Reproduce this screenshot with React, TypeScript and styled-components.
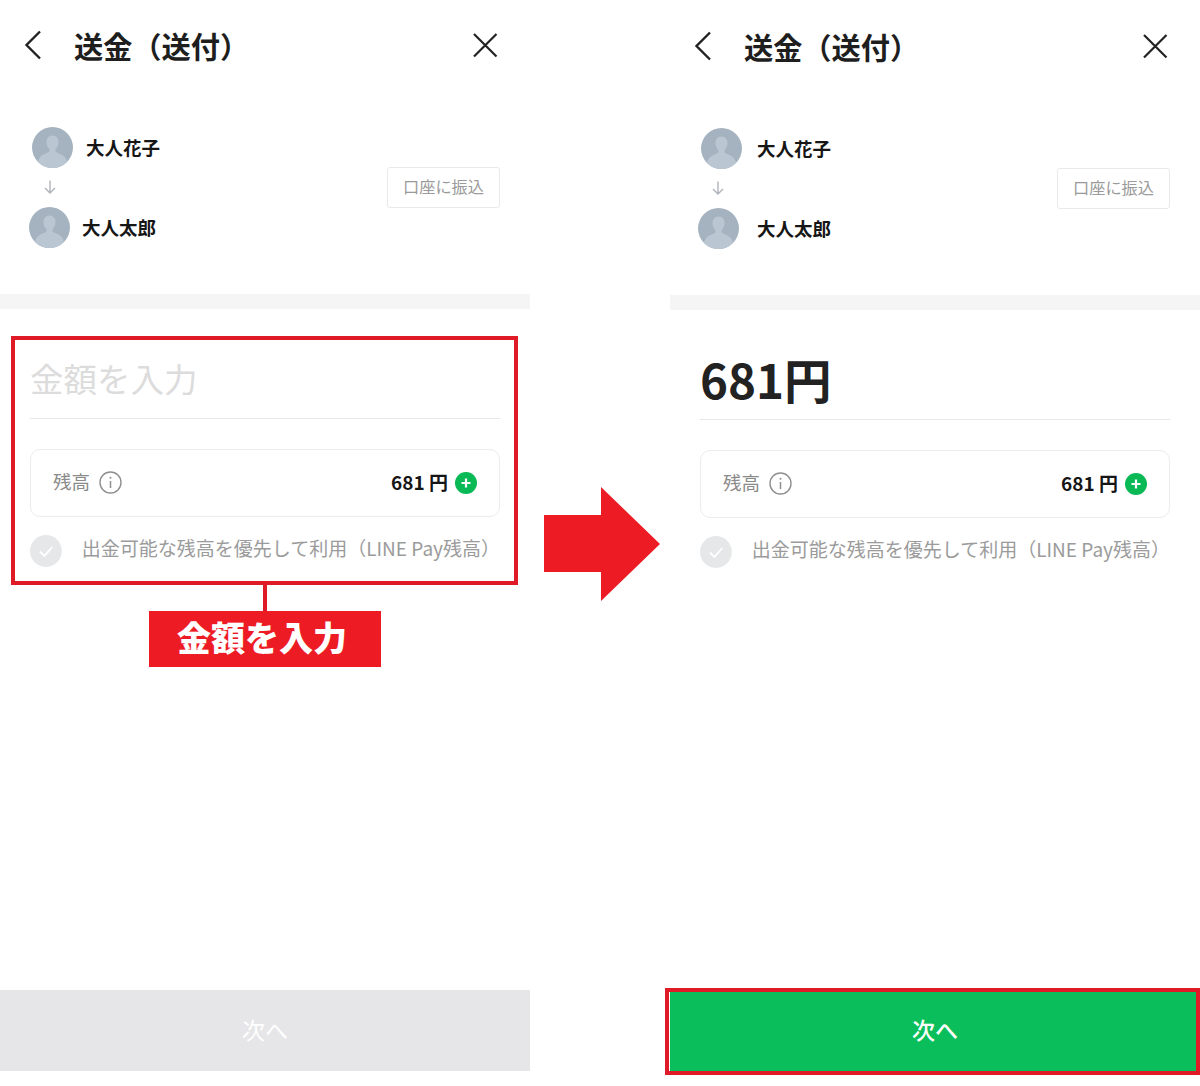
import React from "react";
import styled, { createGlobalStyle } from "styled-components";

const Global = createGlobalStyle`
  html, body { margin: 0; padding: 0; background: #fff; }
  * { box-sizing: border-box; }
  body { font-family: "Noto Sans CJK JP", "Noto Sans", sans-serif; }
`;

const Page = styled.div`
  position: relative;
  display: grid;
  grid-template-columns: 530px 140px 530px;
  width: 1200px;
  height: 1086px;
  overflow: hidden;
`;

const Panel = styled.section<{ $shift: number }>`
  display: flex;
  flex-direction: column;
  height: 1086px;
  padding-top: ${(p) => p.$shift}px;
`;

const Header = styled.header`
  display: flex;
  align-items: center;
  height: 92px;
  padding: 0 32px 0 24px;
`;

const Title = styled.h1`
  flex: 1;
  margin: 0 0 2px 32px;
  font-size: 29.2px;
  line-height: 40px;
  font-weight: 700;
  color: #1e1e1e;
`;

const IconButton = styled.span`
  display: flex;
  margin-bottom: 2px;
  color: #222;
`;

const Transfer = styled.div`
  display: flex;
  align-items: center;
  justify-content: space-between;
  height: 202px;
  padding: 0 30px 12px 0;
`;

const People = styled.div`
  display: flex;
  flex-direction: column;
`;

const Person = styled.div<{ $indent: number; $gap: number }>`
  display: flex;
  align-items: center;
  gap: ${(p) => p.$gap}px;
  height: 41px;
  padding-left: ${(p) => p.$indent}px;
`;

const Name = styled.span`
  font-size: 18.5px;
  font-weight: 700;
  color: #161616;
`;

const FlowArrow = styled.div<{ $indent: number }>`
  display: flex;
  align-items: center;
  height: 39px;
  padding-left: ${(p) => p.$indent}px;
  color: #aeb4ba;
`;

const BankButton = styled.button`
  width: 113px;
  height: 41px;
  padding: 0 0 2px;
  background: #fff;
  border: 1px solid #e9e9e9;
  border-radius: 3px;
  font: 400 16.2px "Noto Sans CJK JP", sans-serif;
  color: #9a9a9a;
`;

const Band = styled.div`
  height: 15px;
  background: #f5f5f6;
`;

const Form = styled.div`
  display: flex;
  flex-direction: column;
  padding: 0 30px;
`;

const AmountRow = styled.div`
  display: flex;
  align-items: center;
  height: 110px;
  padding: 28px 0 0;
  border-bottom: 1.5px solid #e8e8e8;
`;

const Placeholder = styled.span`
  font-size: 33.5px;
  line-height: 44px;
  color: #dcdcdc;
`;

const Amount = styled.span`
  font-size: 47.5px;
  line-height: 50px;
  font-weight: 700;
  color: #222;
`;

const BalanceCard = styled.div`
  display: flex;
  align-items: center;
  height: 68px;
  margin-top: 30px;
  padding: 0 22px;
  border: 1.5px solid #ececec;
  border-radius: 10px;
`;

const BalanceLabel = styled.span`
  margin: 0 9px 4px 0;
  font-size: 18.5px;
  color: #8a8a8a;
`;

const InfoIcon = styled.span`
  display: flex;
  flex: 1;
  margin-bottom: 2px;
  color: #8f8f8f;
`;

const BalanceValue = styled.span`
  margin: 0 7px 4px 0;
  font-size: 19px;
  font-weight: 700;
  color: #161616;
`;

const CheckRow = styled.div`
  display: flex;
  align-items: center;
  gap: 20px;
  margin-top: 17px;
`;

const CheckText = styled.span`
  margin: 0 0 6px;
  font-size: 19px;
  white-space: nowrap;
  color: #9b9b9b;
`;

const NextButton = styled.button<{ $active: boolean }>`
  height: 81px;
  margin-top: auto;
  margin-bottom: 15px;
  padding: 0 0 4px;
  border: 0;
  background: ${(p) => (p.$active ? "#0abf5b" : "#e6e6e8")};
  font: ${(p) => (p.$active ? 500 : 400)} 23px "Noto Sans CJK JP", sans-serif;
  color: #fff;
`;

const ArrowColumn = styled.div`
  display: flex;
  padding: 487px 0 0 14px;
`;

const Highlight = styled.div<{ $x: number; $y: number; $w: number; $h: number }>`
  position: absolute;
  left: ${(p) => p.$x}px;
  top: ${(p) => p.$y}px;
  width: ${(p) => p.$w}px;
  height: ${(p) => p.$h}px;
  border: 4.5px solid #e01b28;
  pointer-events: none;
`;

const Stem = styled.div`
  position: absolute;
  left: 263px;
  top: 584px;
  width: 4px;
  height: 28px;
  background: #e01b28;
`;

const Callout = styled.div`
  position: absolute;
  left: 149px;
  top: 611px;
  display: flex;
  align-items: center;
  justify-content: center;
  width: 232px;
  height: 56px;
  padding: 0 6px 5px 0;
  background: #ed1c24;
  color: #fff;
  font-size: 34px;
  font-weight: 900;
`;

const Back = () => (
  <IconButton>
    <svg width="18" height="30" viewBox="0 0 18 30" fill="none" stroke="currentColor" strokeWidth="2.4">
      <path d="M16 1.5 2.5 15 16 28.5" />
    </svg>
  </IconButton>
);

const Close = () => (
  <IconButton>
    <svg width="26" height="26" viewBox="0 0 26 26" fill="none" stroke="currentColor" strokeWidth="2.2">
      <path d="M2 2l22.500 22.500M24.500 2 2 24.500" />
    </svg>
  </IconButton>
);

const Avatar = () => (
  <svg width="41" height="41" viewBox="0 0 41 41">
    <defs>
      <clipPath id="avatar-clip">
        <circle cx="20.5" cy="20.5" r="20.5" />
      </clipPath>
    </defs>
    <circle cx="20.5" cy="20.5" r="20.5" fill="#a5b3c0" />
    <g clipPath="url(#avatar-clip)" fill="#bac6d2">
      <path d="M20.500 8.500c-4 0-6 3-6 6.600 0 3 1.200 5.600 3 7.200v2.400c-3.200 1.600-9.200 3-11 8.300-.5 1.600-.5 5-.5 8h29c0-3 0-6.400-.5-8-1.800-5.300-7.800-6.700-11-8.300v-2.400c1.800-1.600 3-4.200 3-7.200 0-3.600-2-6.600-6-6.600z" />
    </g>
  </svg>
);

const DownArrow = () => (
  <svg width="12" height="14" viewBox="0 0 12 14" fill="none" stroke="currentColor" strokeWidth="1.400">
    <path d="M6 .5v12.500M1 8l5 5 5-5" />
  </svg>
);

const Info = () => (
  <InfoIcon>
    <svg width="23" height="23" viewBox="0 0 23 23" fill="none" stroke="currentColor">
      <circle cx="11.500" cy="11.500" r="10.500" strokeWidth="1.400" />
      <path d="M11.500 10v7" strokeWidth="1.500" />
      <circle cx="11.500" cy="6.800" r="1" fill="currentColor" stroke="none" />
    </svg>
  </InfoIcon>
);

const Plus = () => (
  <svg width="22" height="22" viewBox="0 0 22 22">
    <circle cx="11" cy="11" r="11" fill="#08b955" />
    <path d="M11 6.500v9M6.500 11h9" stroke="#fff" strokeWidth="2.200" />
  </svg>
);

const Check = () => (
  <svg width="32" height="32" viewBox="0 0 32 32" fill="none">
    <circle cx="16" cy="16" r="16" fill="#e6e7e8" />
    <path d="M10 16.500l4.500 4.500 8-9" stroke="#fff" strokeWidth="1.800" />
  </svg>
);

const BigArrow = () => (
  <svg width="116" height="114" viewBox="0 0 116 114">
    <path d="M0 28h57V0l59 57-59 57V85H0z" fill="#ed1c24" />
  </svg>
);

type PhoneProps = {
  shift: number;
  second: { indent: number; gap: number };
  arrowIndent: number;
  amount?: string;
  active: boolean;
};

const Phone = ({ shift, second, arrowIndent, amount, active }: PhoneProps) => (
  <Panel $shift={shift}>
    <Header>
      <Back />
      <Title>送金（送付）</Title>
      <Close />
    </Header>
    <Transfer>
      <People>
        <Person $indent={active ? 31 : 32} $gap={active ? 15 : 13}>
          <Avatar />
          <Name>大人花子</Name>
        </Person>
        <FlowArrow $indent={arrowIndent}>
          <DownArrow />
        </FlowArrow>
        <Person $indent={second.indent} $gap={second.gap}>
          <Avatar />
          <Name>大人太郎</Name>
        </Person>
      </People>
      <BankButton>口座に振込</BankButton>
    </Transfer>
    <Band />
    <Form>
      <AmountRow>{amount ? <Amount>{amount}</Amount> : <Placeholder>金額を入力</Placeholder>}</AmountRow>
      <BalanceCard>
        <BalanceLabel>残高</BalanceLabel>
        <Info />
        <BalanceValue>681 円</BalanceValue>
        <Plus />
      </BalanceCard>
      <CheckRow>
        <Check />
        <CheckText>出金可能な残高を優先して利用（LINE Pay残高）</CheckText>
      </CheckRow>
    </Form>
    <NextButton $active={active}>次へ</NextButton>
  </Panel>
);

export default function App() {
  return (
    <Page>
      <Global />
      <Phone shift={0} second={{ indent: 29, gap: 12 }} arrowIndent={44} active={false} />
      <ArrowColumn>
        <BigArrow />
      </ArrowColumn>
      <Phone shift={1} second={{ indent: 28, gap: 18 }} arrowIndent={42} amount="681円" active />
      <Highlight $x={11} $y={336} $w={507} $h={249} />
      <Stem />
      <Callout>金額を入力</Callout>
      <Highlight $x={665} $y={988} $w={535} $h={87} />
    </Page>
  );
}
